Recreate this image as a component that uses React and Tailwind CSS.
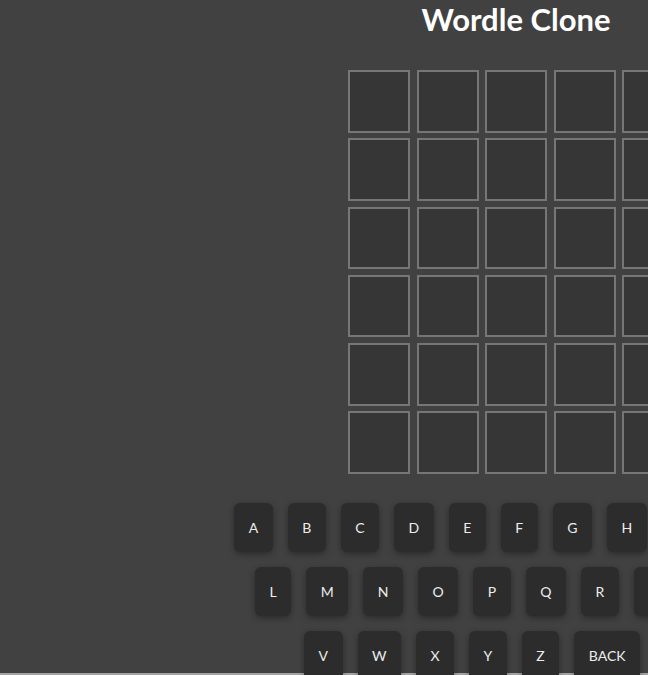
const ROWS = 6;
const COLS = 5;

const KEY_ROWS = [
  ["A", "B", "C", "D", "E", "F", "G", "H", "I", "J", "K"],
  ["L", "M", "N", "O", "P", "Q", "R", "S", "T", "U"],
  ["V", "W", "X", "Y", "Z", "BACK", "ENTER"],
];

function Tile() {
  return (
    <div className="h-[62.5px] w-[62px] border-2 border-[#767676] bg-[#363636]" />
  );
}

function Key({ label }) {
  return (
    <button className="flex h-[49px] items-center justify-center rounded-[6px] bg-[#2c2c2c] px-[14.5px] text-[14px] text-[#ececec] shadow-[0_2px_6px_rgba(0,0,0,0.35)]">
      {label}
    </button>
  );
}

export default function App() {
  return (
    <div className="h-[675px] w-full overflow-hidden bg-[#a3a3a3]">
      <div
        className="flex h-[673px] w-[1032px] flex-col items-center bg-[#414141]"
        style={{ fontFamily: "Lato, 'Open Sans', sans-serif" }}
      >
        <h1 className="mt-[1px] text-[31px] font-bold leading-[36px] text-white">
          Wordle Clone
        </h1>

        <div className="mt-[33px] grid grid-cols-5 gap-x-[6.5px] gap-y-[5.8px]">
          {Array.from({ length: ROWS * COLS }).map((_, i) => (
            <Tile key={i} />
          ))}
        </div>

        <div className="mt-[29px] flex flex-col items-center gap-[15px]">
          {KEY_ROWS.map((row, r) => (
            <div key={r} className="flex gap-[15px]">
              {row.map((k) => (
                <Key key={k} label={k} />
              ))}
            </div>
          ))}
        </div>
      </div>
    </div>
  );
}
